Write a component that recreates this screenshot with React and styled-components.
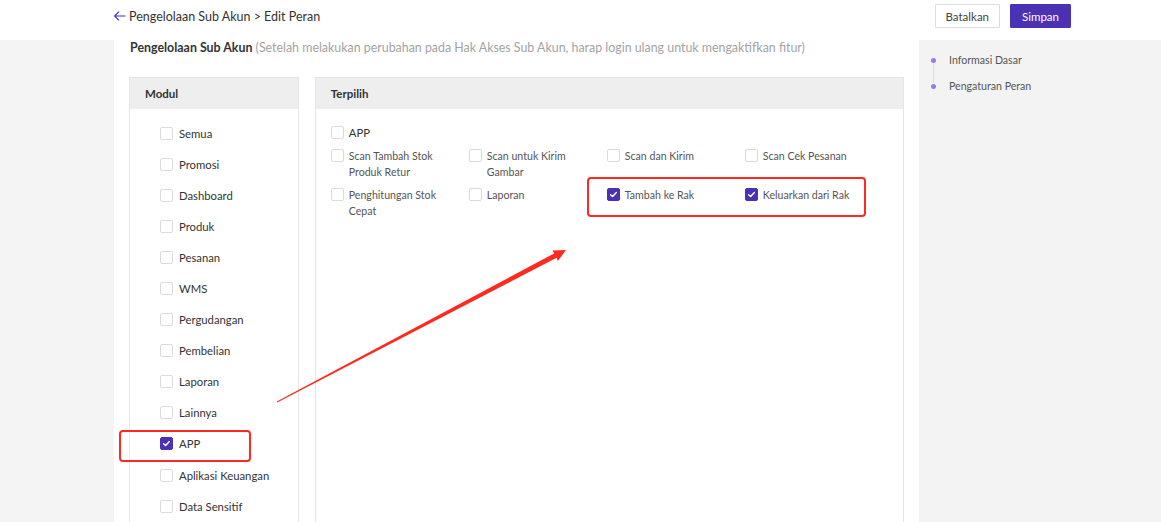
import React from 'react';
import styled, { createGlobalStyle } from 'styled-components';

const GlobalStyle = createGlobalStyle`
  html, body {
    margin: 0;
    padding: 0;
    background: #f4f4f4;
    font-family: Lato, "Open Sans", "Liberation Sans", sans-serif;
    color: #333;
    overflow: hidden;
  }
  * { box-sizing: border-box; }
`;

const Page = styled.div`
  position: relative;
  width: 1161px;
  height: 522px;
  overflow: hidden;
`;

const TopBar = styled.div`
  display: flex;
  align-items: center;
  justify-content: space-between;
  height: 40px;
  padding: 0 90px 8px 113px;
  background: #fff;
`;

const Crumb = styled.div`
  display: flex;
  align-items: center;
  gap: 2px;
  font-size: 12.5px;
  color: #333;
`;

const Actions = styled.div`
  display: flex;
  gap: 10px;
`;

const Button = styled.button`
  height: 24px;
  padding: 0 ${(p) => (p.$primary ? 11 : 10)}px;
  font-family: inherit;
  font-size: 11.5px;
  border-radius: 1px;
  border: 1px solid ${(p) => (p.$primary ? '#4b31b4' : '#dcdcdc')};
  background: ${(p) => (p.$primary ? '#4b31b4' : '#fff')};
  color: ${(p) => (p.$primary ? '#fff' : '#444')};
`;

const Body = styled.div`
  display: flex;
  height: 482px;
`;

const Gutter = styled.div`
  width: 114px;
  flex-shrink: 0;
`;

const Main = styled.div`
  width: 805px;
  flex-shrink: 0;
  background: #fff;
  padding: 1px 15px 0;
`;

const Title = styled.div`
  font-size: 12.4px;
  line-height: 14px;
  padding-left: 1px;
  b { font-weight: 700; color: #333; }
  span { color: #a3a3a3; }
`;

const Panels = styled.div`
  display: flex;
  gap: 16px;
  margin-top: 22px;
`;

const Panel = styled.div`
  width: ${(p) => p.$width}px;
  border: 1px solid #e6e6e6;
  border-bottom: none;
  height: 460px;
`;

const PanelHead = styled.div`
  height: 31px;
  display: flex;
  align-items: center;
  padding-left: 15px;
  background: #eeeeee;
  font-size: 11.5px;
  font-weight: 700;
  color: #333;
`;

const ModuleList = styled.div`
  display: flex;
  flex-direction: column;
  padding: 9px 0 0 30px;
`;

const ModuleItem = styled.label`
  display: flex;
  align-items: center;
  gap: 6px;
  height: 31.05px;
  font-size: 11.3px;
  color: #333;
`;

const Box = styled.span`
  width: 13px;
  height: 13px;
  flex-shrink: 0;
  border-radius: 2px;
  border: 1px solid ${(p) => (p.$checked ? '#4b31b4' : '#dadada')};
  background: ${(p) => (p.$checked ? '#4b31b4' : '#fff')};
  display: flex;
  align-items: center;
  justify-content: center;
`;

const SelectedBody = styled.div`
  display: flex;
  flex-direction: column;
  gap: 7px;
  padding: 16px 0 0 15px;
`;

const SubGrid = styled.div`
  display: grid;
  grid-template-columns: repeat(4, 138px);
  row-gap: 7px;
`;

const Option = styled.label`
  display: flex;
  align-items: flex-start;
  gap: 5px;
  padding-right: 20px;
  font-size: ${(p) => (p.$strong ? 11.3 : 10.6)}px;
  line-height: 16px;
  color: ${(p) => (p.$strong ? '#333' : '#555')};
  ${Box} { margin-top: 1px; }
`;

const Side = styled.div`
  flex: 1;
  background: #f3f3f3;
  padding: 12px 0 0 12px;
`;

const Steps = styled.div`
  display: flex;
  flex-direction: column;
  gap: 10px;
`;

const Step = styled.div`
  position: relative;
  display: flex;
  align-items: center;
  gap: 13px;
  height: 16px;
  font-size: 10.6px;
  color: #555;
  &::before {
    content: '';
    width: 5px;
    height: 5px;
    border-radius: 50%;
    background: #9b7be3;
  }
  &:not(:last-child)::after {
    content: '';
    position: absolute;
    left: 2px;
    top: 11px;
    width: 1px;
    height: 20px;
    background: #dcdcdc;
  }
`;

const Overlay = styled.svg`
  position: absolute;
  left: 0;
  top: 0;
  pointer-events: none;
`;

const Check = () => (
  <svg width="9" height="9" viewBox="0 0 10 10">
    <path d="M1.8 5.2 L4 7.2 L8.2 2.8" fill="none" stroke="#fff" strokeWidth="1.6" strokeLinecap="round" strokeLinejoin="round" />
  </svg>
);

const Checkbox = ({ checked }) => <Box $checked={checked}>{checked && <Check />}</Box>;

const modules = [
  'Semua', 'Promosi', 'Dashboard', 'Produk', 'Pesanan', 'WMS', 'Pergudangan',
  'Pembelian', 'Laporan', 'Lainnya', 'APP', 'Aplikasi Keuangan', 'Data Sensitif',
];

const options = [
  { label: 'Scan Tambah Stok Produk Retur' },
  { label: 'Scan untuk Kirim Gambar' },
  { label: 'Scan dan Kirim' },
  { label: 'Scan Cek Pesanan' },
  { label: 'Penghitungan Stok Cepat' },
  { label: 'Laporan' },
  { label: 'Tambah ke Rak', checked: true },
  { label: 'Keluarkan dari Rak', checked: true },
];

const App = () => (
  <Page>
    <GlobalStyle />
    <TopBar>
      <Crumb>
        <svg width="14" height="12" viewBox="0 0 14 12">
          <path d="M12.5 6 H1.8 M6 1.6 L1.6 6 L6 10.4" fill="none" stroke="#4b31b4" strokeWidth="1.2" />
        </svg>
        Pengelolaan Sub Akun &gt; Edit Peran
      </Crumb>
      <Actions>
        <Button>Batalkan</Button>
        <Button $primary>Simpan</Button>
      </Actions>
    </TopBar>
    <Body>
      <Gutter />
      <Main>
        <Title>
          <b>Pengelolaan Sub Akun</b>{' '}
          <span>(Setelah melakukan perubahan pada Hak Akses Sub Akun, harap login ulang untuk mengaktifkan fitur)</span>
        </Title>
        <Panels>
          <Panel $width={170}>
            <PanelHead>Modul</PanelHead>
            <ModuleList>
              {modules.map((m) => (
                <ModuleItem key={m}>
                  <Checkbox checked={m === 'APP'} />
                  {m}
                </ModuleItem>
              ))}
            </ModuleList>
          </Panel>
          <Panel $width={590}>
            <PanelHead>Terpilih</PanelHead>
            <SelectedBody>
              <Option $strong>
                <Checkbox />
                APP
              </Option>
              <SubGrid>
                {options.map((o) => (
                  <Option key={o.label}>
                    <Checkbox checked={o.checked} />
                    <span>{o.label}</span>
                  </Option>
                ))}
              </SubGrid>
            </SelectedBody>
          </Panel>
        </Panels>
      </Main>
      <Side>
        <Steps>
          <Step>Informasi Dasar</Step>
          <Step>Pengaturan Peran</Step>
        </Steps>
      </Side>
    </Body>
    <Overlay width="1161" height="522" viewBox="0 0 1161 522">
      <rect x="120" y="431" width="130" height="30" rx="3" fill="none" stroke="#ff2a1f" strokeWidth="2" />
      <rect x="588" y="178" width="277" height="38" rx="3" fill="none" stroke="#ff2a1f" strokeWidth="2" />
      <polygon
        points="277.2,402.4 556.6,257.8 557.9,261 566,250 552.5,250.6 554.2,253.4 276.8,401.6"
        fill="#ff2a1f"
      />
    </Overlay>
  </Page>
);

export default App;
